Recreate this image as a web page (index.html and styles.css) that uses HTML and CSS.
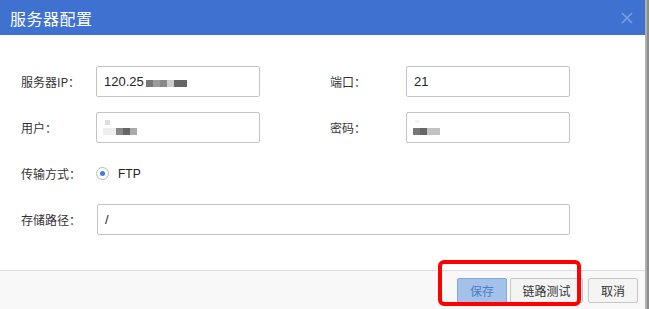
FILE: index.html
```html
<!DOCTYPE html>
<html lang="zh-CN">
<head>
    <meta charset="UTF-8">
    <meta name="viewport" content="width=device-width, initial-scale=1.0">
    <title>服务器配置</title>
    <link rel="stylesheet" href="styles.css">
</head>
<body>

    <div class="dialog">
        <div class="dialog-header">
            <span class="dialog-title">服务器配置</span>
            <svg class="close" width="12" height="12" viewBox="0 0 12 12">
                <path d="M1 1 L11 11 M11 1 L1 11" stroke="#7d9fdc" stroke-width="1.6" fill="none"/>
            </svg>
        </div>

        <div class="dialog-body">
            <label class="label">服务器IP：</label>
            <div class="field">120.25<span class="mosaic m-ip"><i class="c7"></i><i class="c9"></i><i class="c8"></i><i class="cc"></i><i class="c6 wide"></i></span></div>
            <span></span>
            <label class="label">端口：</label>
            <div class="field">21</div>

            <label class="label">用户：</label>
            <div class="field masked">
                <span class="dot-top"></span>
                <span class="mosaic"><i class="ce wide"></i><i class="c8"></i><i class="c6"></i><i class="ca"></i></span>
            </div>
            <span></span>
            <label class="label">密码：</label>
            <div class="field masked">
                <span class="dot-top faint"></span>
                <span class="mosaic"><i class="c7"></i><i class="c6"></i><i class="cb wide"></i></span>
            </div>

            <label class="label">传输方式：</label>
            <div class="radio-row">
                <span class="radio"><span class="radio-dot"></span></span>
                <span>FTP</span>
            </div>
            <span></span><span></span><span></span>

            <label class="label">存储路径：</label>
            <div class="field path">/</div>
        </div>

        <div class="dialog-footer">
            <button class="btn btn-primary">保存</button>
            <button class="btn btn-test">链路测试</button>
            <button class="btn btn-cancel">取消</button>
            <div class="highlight"></div>
        </div>
    </div>

</body>
</html>
```

FILE: styles.css
```css
body {
    margin: 0;
    background-color: #8c8c8c;
    font-family: "Liberation Sans", "Noto Sans CJK SC", sans-serif;
    font-size: 12px;
    color: #333;
}

.dialog {
    width: 645px;
    height: 309px;
    background-color: #fff;
    display: flex;
    flex-direction: column;
    border-right: 2px solid #b0b0b0;
}

.dialog-header {
    height: 35px;
    flex-shrink: 0;
    background-color: #3f72d0;
    display: flex;
    align-items: center;
    justify-content: space-between;
    padding: 0 12px 0 10px;
}

.dialog-title {
    color: #fff;
    font-family: "Noto Sans CJK SC", sans-serif;
    font-size: 16px;
    letter-spacing: 0.5px;
}

.dialog-body {
    flex: 1;
    display: grid;
    grid-template-columns: 75px 164px 70px 76px 164px;
    grid-auto-rows: 31px;
    row-gap: 15px;
    padding: 31px 0 0 21px;
    align-content: start;
    align-items: center;
}

.label {
    font-family: "Noto Sans CJK SC", sans-serif;
    font-size: 12px;
    color: #333;
    white-space: nowrap;
}

.field {
    height: 31px;
    box-sizing: border-box;
    border: 1px solid #c4c4c4;
    border-radius: 2px;
    padding: 0 7px;
    display: flex;
    align-items: center;
    font-size: 13px;
    color: #222;
    position: relative;
}

.field.path {
    grid-column: 2 / span 4;
    margin-left: 1px;
}

.mosaic {
    display: inline-flex;
    height: 7px;
}

.m-ip {
    margin-left: 2px;
    margin-top: 3px;
}

.mosaic i {
    display: block;
    width: 7px;
    height: 100%;
}

.mosaic i.wide {
    width: 13px;
}

.c6 { background-color: #666; }
.c7 { background-color: #777; }
.c8 { background-color: #888; }
.c9 { background-color: #9a9a9a; }
.ca { background-color: #aaa; }
.cb { background-color: #c2c2c2; }
.cc { background-color: #ccc; }
.ce { background-color: #eee; }

.masked .mosaic {
    margin-top: 8px;
    margin-left: -1px;
}

.dot-top {
    position: absolute;
    left: 8px;
    top: 7px;
    width: 5px;
    height: 5px;
    background-color: #ddd;
}

.dot-top.faint {
    background-color: #f0f0f0;
    width: 4px;
    height: 3px;
}

.radio-row {
    display: flex;
    align-items: center;
    gap: 9px;
    font-size: 12px;
    color: #222;
}

.radio {
    width: 11px;
    height: 11px;
    border: 1px solid #b8b8b8;
    border-radius: 50%;
    display: flex;
    align-items: center;
    justify-content: center;
}

.radio-dot {
    width: 5px;
    height: 5px;
    border-radius: 50%;
    background-color: #3a7fe0;
}

.dialog-footer {
    box-sizing: border-box;
    height: 39px;
    flex-shrink: 0;
    border-top: 1px solid #ddd;
    background-color: #f8f8f8;
    display: flex;
    justify-content: flex-end;
    align-items: flex-start;
    gap: 3px;
    padding: 7px 7px 0 0;
    position: relative;
}

.btn {
    height: 25px;
    min-width: 50px;
    padding: 0 9px;
    border: 1px solid #c6c6c6;
    border-radius: 2px;
    background-color: #f4f4f4;
    font-family: "Noto Sans CJK SC", sans-serif;
    font-size: 12px;
    color: #333;
}

.btn-test {
    width: 73px;
}

.btn-cancel {
    margin-left: 2px;
}

.btn-primary {
    background-color: #a3c1ea;
    border-color: #86a8dc;
    color: #4f7cc4;
}

.highlight {
    position: absolute;
    left: 438px;
    top: -11px;
    width: 135px;
    height: 38px;
    border: 4px solid #f00;
    border-radius: 6px;
}
```
